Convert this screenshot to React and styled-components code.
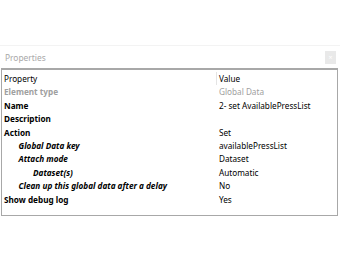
import React from "react";
import styled, { createGlobalStyle } from "styled-components";

const Global = createGlobalStyle`
  html, body { margin: 0; padding: 0; background: #fff; }
  body { font-family: "Noto Sans", "DejaVu Sans", sans-serif; font-size: 8.2px; color: #000; }
`;

const Page = styled.div`
  width: 340px;
  height: 260px;
  background: #fff;
  display: flex;
  flex-direction: column;
  padding-top: 45px;
  box-sizing: border-box;
`;

const TopRule = styled.div`
  height: 1px;
  background: #f3f3f3;
`;

const TitleBar = styled.div`
  display: flex;
  align-items: center;
  justify-content: space-between;
  height: 22px;
  padding: 0 4px 0 5px;
`;

const Title = styled.span`
  color: #a8a8a8;
  font-size: 8.4px;
`;

const CloseBtn = styled.div`
  width: 11px;
  height: 13px;
  background: #e9e9e9;
  color: #fff;
  font-size: 7px;
  display: flex;
  align-items: center;
  justify-content: center;
`;

const Grid = styled.div`
  margin: 0 2px 0 1px;
  border: 1px solid #a8a8a8;
  border-top-width: 2px;
  display: grid;
  grid-template-columns: 214px 1fr;
  padding: 2px 0 9px;
`;

const Cell = styled.div`
  height: 13.4px;
  line-height: 13.4px;
  white-space: nowrap;
  padding-left: ${(p) => 2 + p.$indent * 14.5}px;
  font-weight: ${(p) => (p.$bold ? 700 : 400)};
  font-style: ${(p) => (p.$italic ? "italic" : "normal")};
  color: ${(p) => (p.$muted ? "#a0a0a0" : "#000")};
`;

const ValueCell = styled(Cell)`
  padding-left: 2px;
  border-left: ${(p) => (p.$head ? "1px solid #e4e4e4" : "1px solid transparent")};
`;

const rows = [
  { k: "Property", v: "Value", head: true },
  { k: "Element type", v: "Global Data", muted: true, bold: true },
  { k: "Name", v: "2- set AvailablePressList", bold: true },
  { k: "Description", v: "", bold: true },
  { k: "Action", v: "Set", bold: true },
  { k: "Global Data key", v: "availablePressList", bold: true, italic: true, indent: 1 },
  { k: "Attach mode", v: "Dataset", bold: true, italic: true, indent: 1 },
  { k: "Dataset(s)", v: "Automatic", bold: true, italic: true, indent: 2 },
  { k: "Clean up this global data after a delay", v: "No", bold: true, italic: true, indent: 1 },
  { k: "Show debug log", v: "Yes", bold: true },
];

export default function App() {
  return (
    <>
      <Global />
      <Page>
        <TopRule />
        <TitleBar>
          <Title>Properties</Title>
          <CloseBtn>×</CloseBtn>
        </TitleBar>
        <Grid>
          {rows.map((r) => (
            <React.Fragment key={r.k}>
              <Cell $indent={r.indent || 0} $bold={r.bold} $italic={r.italic} $muted={r.muted}>
                {r.k}
              </Cell>
              <ValueCell $indent={0} $head={r.head} $muted={r.muted}>
                {r.v}
              </ValueCell>
            </React.Fragment>
          ))}
        </Grid>
      </Page>
    </>
  );
}
